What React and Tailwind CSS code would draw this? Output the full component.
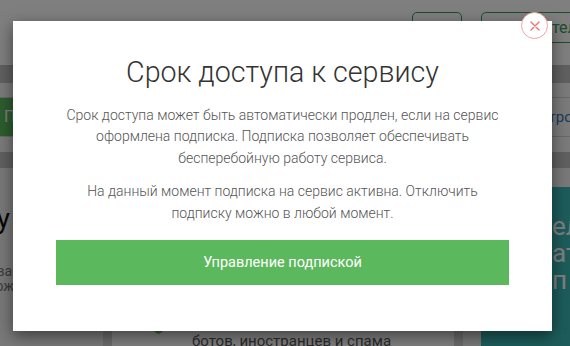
export default function App() {
  return (
    <div className="relative w-[570px] h-[346px] overflow-hidden bg-[#f2f2f2] font-['Roboto',sans-serif]">
      {/* background page */}
      <div className="flex flex-col">
        <header className="h-[65px] bg-white flex items-start pt-[12px] pl-[412px] gap-[19px] shrink-0">
          <div className="w-[50px] h-[31px] shrink-0 rounded-[5px] border border-[#3c9a5c]" />
          <div className="h-[31px] w-[150px] shrink-0 rounded-[5px] border border-[#3c9a5c] text-[#3c9a5c] text-[16px] leading-[29px] pl-[7px] whitespace-nowrap flex">
            <span className="inline-block w-[63px] overflow-hidden">Для чита</span>
            <span>телей</span>
          </div>
        </header>
        <div className="h-[18px] bg-[#c0c0c0]" />
        <div className="h-[14px] bg-[#f6f6f6]" />
        <nav className="h-[40px] border-y border-[#d2d2d2] bg-[#f6f6f6] flex items-stretch">
          <div className="w-[90px] bg-[#5aba5c] text-white text-[16px] leading-[38px] pl-[4px]">Подписка</div>
          <div className="ml-[444px] text-[#3a76b4] text-[15px] leading-[38px] whitespace-nowrap">Настройки</div>
        </nav>
        <div className="h-[15px] bg-[#f6f6f6]" />
        <div className="h-[16px] bg-[#c0c0c0]" />
        <div className="flex items-start">
          <div className="w-[95px] shrink-0 pt-[34px]">
            <div className="-ml-[100px] w-[110px] text-right text-[28px] leading-[34px] text-[#111] whitespace-nowrap">Защиту</div>
            <div className="-ml-[18px] mt-[28px] text-[14px] leading-[15px] text-[#777] whitespace-nowrap">
              <div>товары</div>
              <div>ухоже</div>
            </div>
          </div>
          <div className="ml-[8px] w-[360px] shrink-0 bg-[#d6d6d6] px-[9px] pt-[9px] h-[200px] mt-[19px]">
            <div className="bg-white h-full pt-[115px] pl-[38px] flex gap-[25px]">
              <svg width="17" height="20" viewBox="0 0 17 20" className="mt-[3px] shrink-0">
                <path d="M8.5 0 L17 3 V9 C17 14 13 18 8.5 20 C4 18 0 14 0 9 V3 Z" fill="#5fbf6a" />
              </svg>
              <div className="text-[15px] leading-[20px] text-[#555]">
                <div>Защита от</div>
                <div>ботов, иностранцев и спама</div>
              </div>
            </div>
          </div>
          <div className="ml-[18px] mt-[19px] w-[100px] h-[200px] shrink-0 overflow-hidden bg-[#3ab8b6] pl-[71px] pt-[26px] text-white text-[26px] leading-[27px] whitespace-nowrap">
            <div>ел</div>
            <div>ат</div>
            <div>п</div>
          </div>
        </div>
      </div>

      {/* backdrop */}
      <div className="absolute inset-0 bg-black/50" />

      {/* modal */}
      <div className="absolute left-[13px] top-[21px] w-[539px] h-[310px] bg-white shadow-[0_5px_15px_rgba(0,0,0,0.5)] px-[43px] pt-[33px] flex flex-col items-stretch text-center">
        <button className="absolute top-[-9px] right-[4px] w-[27px] h-[27px] rounded-full bg-white border border-[#f4a3a3] flex items-center justify-center">
          <svg width="10" height="10" viewBox="0 0 10 10">
            <path d="M1 1 L9 9 M9 1 L1 9" stroke="#ef6f6f" strokeWidth="1.3" strokeLinecap="round" />
          </svg>
        </button>
        <h2 className="text-[28.6px] leading-[36px] font-light text-[#333]">Срок доступа к сервису</h2>
        <p className="mt-[15px] text-[14px] leading-[21.4px] font-light text-[#555] whitespace-nowrap">
          Срок доступа может быть автоматически продлен, если на сервис
          <br />
          оформлена подписка. Подписка позволяет обеспечивать
          <br />
          бесперебойную работу сервиса.
        </p>
        <p className="mt-[12px] text-[14px] leading-[21.4px] font-light text-[#555] whitespace-nowrap">
          На данный момент подписка на сервис активна. Отключить
          <br />
          подписку можно в любой момент.
        </p>
        <button className="mt-[16px] h-[45px] w-full bg-[#5cb85c] text-white text-[14.5px]">
          Управление подпиской
        </button>
      </div>
    </div>
  );
}
